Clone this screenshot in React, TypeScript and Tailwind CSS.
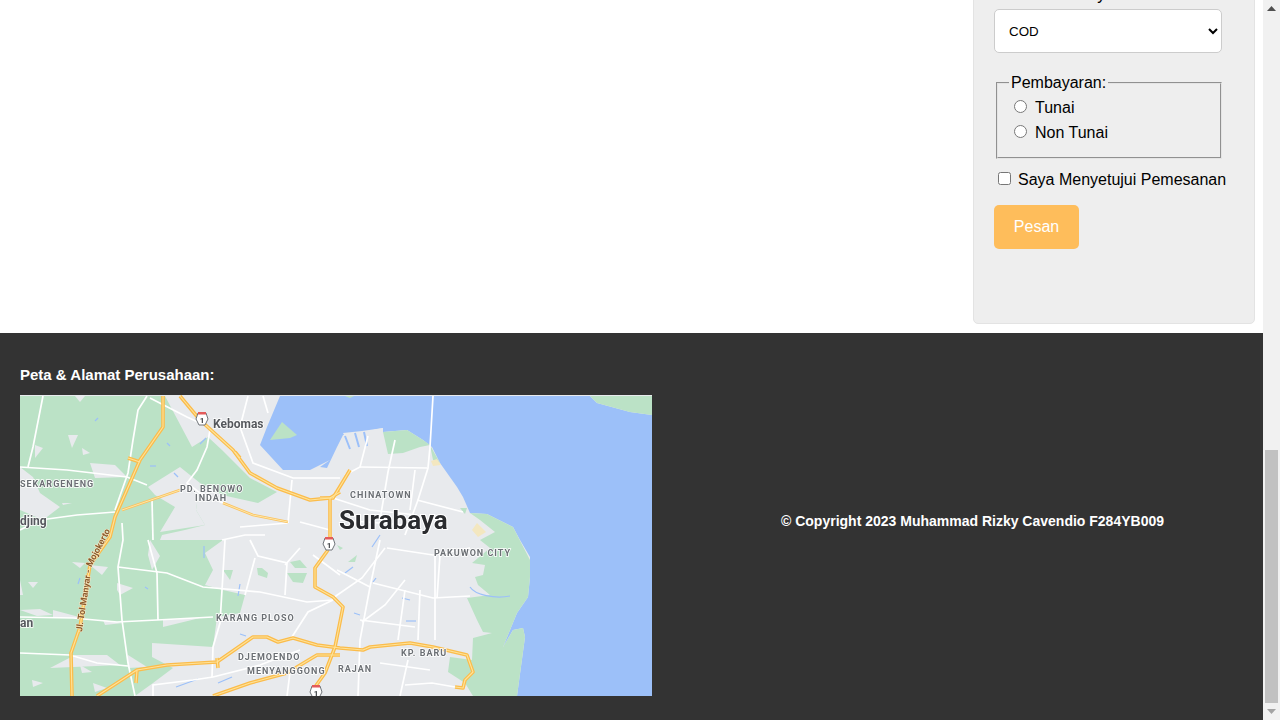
import React from 'react';

// map is traced in page pixels, so the viewBox starts at the map's corner on the page
const greens = [
  '20,396 165,396 192,447 208,437 222,450 250,478 277,492 258,503 222,495 200,483 196,510 205,525 185,530 162,535 160,540 223,540 205,553 213,570 205,585 223,590 245,595 240,613 217,617 213,647 152,643 152,657 173,668 153,683 135,696 20,696',
  '383,432 407,430 423,440 430,445 420,447 403,453 388,454',
  '430,445 440,463 433,460',
  '470,513 487,514 513,527 530,560 530,577 528,597 517,613 503,647 513,630 523,628 525,637 517,696 473,696 465,683 448,672 450,657 472,660 473,638 492,633 483,632 477,620 467,598 490,595 478,585 475,577 483,575 485,565 472,563 490,548 480,540 495,532 480,520',
  '590,396 652,396 652,415 630,412 597,403',
  '223,570 233,570 230,580',
  '257,568 262,568 268,573 267,578 258,575',
  '287,573 307,573 303,583 293,582',
  '290,562 300,560 307,568 295,568',
  '337,545 343,548 340,550',
  '348,562 357,555 355,562',
  '460,508 467,508 465,514',
  '282,422 297,435 290,438 270,440',
  '345,396 354,396 350,398',
];

const grayPatches = [
  '148,487 180,467 200,483 196,510 205,525 160,532 175,507 155,495',
  '90,463 115,465 127,477 95,478',
  '20,467 33,477 40,493 60,507 43,520 20,510',
  '68,435 78,435 72,448',
  '82,448 90,453 83,455',
  '35,445 43,448 35,458',
  '62,503 72,503 63,505',
  '75,396 85,396 80,402',
  '72,562 85,563 80,568',
  '90,565 108,567 102,575',
  '20,580 23,595 20,595',
  '28,582 38,582 33,588',
  '117,583 133,588 120,595 117,590',
  '20,610 40,609 53,615 37,616',
  '53,610 83,618 53,618',
  '103,620 123,623 105,625',
  '163,620 200,618 163,627',
  '32,680 43,683 33,687',
  '80,665 92,672 82,673',
  '93,683 107,688 95,692',
  '128,655 147,667 128,668',
  '75,655 107,655 120,665 50,668',
  '150,540 160,556 152,570 148,555',
];

const water = [
  '280,396 590,396 597,403 630,412 652,415 652,696 517,696 525,637 523,628 513,630 503,647 517,613 528,597 530,577 530,557 520,540 513,527 487,514 470,513 463,497 457,487 440,463 432,447 423,440 407,430 383,432 383,428 363,432 343,435 337,447 327,468 320,467 330,460 310,470 283,470 260,445 267,427',
];

const waterStreaks = [
  'M95 421l3 -3', 'M200 444l6 -6', 'M167 443l3 3', 'M150 466h6', 'M174 473l4 4',
  'M204 546v12', 'M80 578l-2 6', 'M145 587l3 2', 'M240 584l-2 12',
  'M176 687l22 -8', 'M218 683l14 -6', 'M240 634l6 2', 'M376 578l-3 4',
  'M402 598l8 2', 'M406 621h10', 'M354 613l6 2', 'M470 587c5 8 25 12 40 9',
  'M380 535l-8 12', 'M345 573l8 -6',
];

const whiteRoads = [
  'M43 396L33 447L28 467',
  'M20 467L67 470L127 477L147 485',
  'M147 396L138 410L133 440L128 473L115 510',
  'M20 530L40 520L77 515L115 512',
  'M150 398L187 417L200 423',
  'M248 396L240 427L253 463L293 478L340 478',
  'M263 396L268 413',
  'M292 480L288 523',
  'M210 430L207 447L197 470L187 483L200 493L223 503',
  'M152 500L153 540',
  'M148 540L157 573L158 620',
  'M122 523L123 540L118 567L122 620L128 663L135 696',
  'M118 567L167 573L203 587L260 592L307 602L333 600',
  'M20 617L73 618L117 622L157 620L213 617',
  'M225 540L222 590L220 623L213 647L212 677',
  'M20 653L70 655L97 663L128 666',
  'M153 696L153 685L193 680L213 677L260 665L300 650',
  'M433 396L430 447L428 468L418 500L405 535',
  'M360 467L427 468',
  'M417 500L463 512',
  'M333 498L370 510L417 515',
  'M387 548L433 555L470 548',
  'M435 555L435 640',
  'M373 583L433 598L470 596',
  'M380 540L370 587L360 640L358 696',
  'M345 475L360 467L368 436',
  'M395 440L388 472L380 520',
  'M415 470L410 510',
  'M340 520L405 525',
  'M337 570L370 587',
  'M333 598L362 578L385 548',
  'M405 590L398 640',
  'M420 590L418 640',
  'M360 620L415 627',
  'M405 580L385 605L362 622',
  'M408 660L400 696',
  'M380 663L430 670',
  'M405 685L432 683L455 687',
  'M250 540L258 556L287 563L285 595',
  'M255 558L245 595',
  'M300 548L285 565',
  'M313 555L340 575',
  'M290 640L308 612L333 600',
  'M287 696L290 672',
  'M440 555L437 598',
  'M222 540L245 535L265 535',
  'M240 527L288 523',
  'M300 522L330 530',
];

const yellowRoads = [
  'M163 396L163 427L140 460L115 517L110 537L90 565L80 627L71 653L72 696',
  'M180 396L200 420L233 450L250 473L277 488L310 500L330 498L340 492',
  'M320 498L333 498L350 470',
  'M330 498L330 537',
  'M328 550L315 568L315 587L333 597L343 607L335 647L325 673L315 687',
  'M97 696L137 670L167 665L217 662L253 637L267 637L278 642L293 638L317 645L340 648L363 650L370 647L410 643L433 647L467 655L473 672L465 680L463 688L455 687',
  'M213 696L250 683L287 673L317 655L340 655',
  'M128 458L140 462',
  'M235 452L240 458',
  'M137 670L136 683',
  'M217 658L218 668',
];

const yellowBranches = ['M122 510L180 490', 'M223 503L253 515L288 522'];

const shields: [number, number][] = [[202, 419], [329, 544], [316, 692]];

const labels = [
  { t: 'Kebomas', x: 213, y: 428, cls: 'text-[12px] fill-[#55585d]' },
  { t: 'SEKARGENENG', x: 20, y: 487, cls: 'text-[9px] tracking-[1px] fill-[#6b6f74]' },
  { t: 'djing', x: 20, y: 525, cls: 'text-[12px] fill-[#55585d]' },
  { t: 'PD. BENOWO', x: 180, y: 492, cls: 'text-[9px] tracking-[1px] fill-[#6b6f74]' },
  { t: 'INDAH', x: 195, y: 501, cls: 'text-[9px] tracking-[1px] fill-[#6b6f74]' },
  { t: 'CHINATOWN', x: 350, y: 498, cls: 'text-[9px] tracking-[1px] fill-[#6b6f74]' },
  { t: 'PAKUWON CITY', x: 434, y: 556, cls: 'text-[9px] tracking-[1px] fill-[#6b6f74]' },
  { t: 'KARANG PLOSO', x: 216, y: 621, cls: 'text-[9px] tracking-[1px] fill-[#6b6f74]' },
  { t: 'DJEMOENDO', x: 238, y: 660, cls: 'text-[9px] tracking-[1px] fill-[#6b6f74]' },
  { t: 'MENYANGGONG', x: 247, y: 674, cls: 'text-[9px] tracking-[1px] fill-[#6b6f74]' },
  { t: 'RAJAN', x: 338, y: 672, cls: 'text-[9px] tracking-[1px] fill-[#6b6f74]' },
  { t: 'KP. BARU', x: 401, y: 656, cls: 'text-[9px] tracking-[1px] fill-[#6b6f74]' },
  { t: 'an', x: 20, y: 627, cls: 'text-[12px] fill-[#55585d]' },
];

const MapPicture = () => (
  <svg viewBox="20 395 632 301" className="block w-[632px] h-[301px] blur-[0.5px] font-['Roboto',sans-serif]">
    <defs>
      <path id="tol-label" d="M82 632L92 566L116 520" />
    </defs>
    <rect x="20" y="395" width="632" height="301" fill="#e8eaed" />
    {water.map((p) => <polygon key={p} points={p} fill="#9cc0f9" />)}
    {greens.map((p) => <polygon key={p} points={p} fill="#bbe2c6" />)}
    {grayPatches.map((p) => <polygon key={p} points={p} fill="#e8eaed" />)}
    <polygon points="477,523 486,532 478,537 472,530" fill="#f3e7c0" />
    <polygon points="431,461 437,459 441,465 433,466" fill="#f3e7c0" />
    {/* harbour piers */}
    <polygon points="343,433 362,431 383,428 378,445 352,450" fill="#e8eaed" />
    <path d="M345 436l5 13M355 433l4 14M364 432l3 14" stroke="#9cc0f9" strokeWidth="2" fill="none" />
    {waterStreaks.map((d) => <path key={d} d={d} stroke="#9cc0f9" strokeWidth="1.2" fill="none" />)}
    {whiteRoads.map((d) => <path key={d} d={d} stroke="#ffffff" strokeWidth="1.7" fill="none" />)}
    {yellowBranches.map((d) => (
      <g key={d} fill="none">
        <path d={d} stroke="#fbc25e" strokeWidth="2.6" />
        <path d={d} stroke="#fee7a8" strokeWidth="1" />
      </g>
    ))}
    {yellowRoads.map((d) => <path key={d} d={d} stroke="#fbbc4b" strokeWidth="3.6" fill="none" strokeLinejoin="round" />)}
    {yellowRoads.map((d) => <path key={d + 'i'} d={d} stroke="#fee39a" strokeWidth="1.1" fill="none" strokeLinejoin="round" />)}
    {shields.map(([x, y]) => (
      <g key={x}>
        <polygon points={`${x - 4},${y - 6} ${x + 4},${y - 6} ${x + 6},${y} ${x + 3},${y + 6} ${x - 3},${y + 6} ${x - 6},${y}`} fill="#ffffff" stroke="#70757a" strokeWidth="1" />
        <rect x={x - 4} y={y - 7} width="8" height="2.5" fill="#e35b5b" />
        <text x={x} y={y + 4} textAnchor="middle" className="text-[8px] font-bold fill-[#3c4043]">1</text>
      </g>
    ))}
    {labels.map((l) => (
      <text key={l.t} x={l.x} y={l.y} stroke="#ffffff" strokeWidth="1.5" paintOrder="stroke" className={l.cls}>{l.t}</text>
    ))}
    <text x="339" y="529" stroke="#ffffff" strokeWidth="2" paintOrder="stroke" className="text-[26px] fill-[#2b2c2f]">Surabaya</text>
    <text stroke="#fbe9c8" strokeWidth="1" paintOrder="stroke" className="text-[9px] fill-[#8a5a2b]">
      <textPath href="#tol-label">Jl. Tol Manyar - Mojokerto</textPath>
    </text>
  </svg>
);

const OrderPanel = () => (
  <div className="w-[282px] h-[364px] -mt-[40px] px-[20px] pt-[25px] bg-[#eeeeee] border border-[#e3e3e3] rounded-[5px] text-[16px] text-black">
    <label className="block leading-[18px] mb-[5px]">Sistem Delivery:</label>
    <select className="block w-[228px] h-[44px] pl-[10px] pr-[1px] bg-white border border-[#cccccc] rounded-[5px] text-[13.33px] text-black">
      <option>COD</option>
    </select>
    <fieldset className="w-[226px] h-[85px] mt-[21px] ml-[2px] pl-[16px] border-2 border-[#e4e4e4] [border-style:groove]">
      <legend className="px-[2px] leading-[18px] -ml-[5px]">Pembayaran:</legend>
      <label className="flex items-center h-[25px] mt-[3px]">
        <input type="radio" name="bayar" className="w-[13px] h-[13px] -mt-[2px] mr-[8px]" />
        Tunai
      </label>
      <label className="flex items-center h-[25px]">
        <input type="radio" name="bayar" className="w-[13px] h-[13px] -mt-[2px] mr-[8px]" />
        Non Tunai
      </label>
    </fieldset>
    <label className="flex items-center h-[24px] mt-[9px] ml-[4px] whitespace-nowrap">
      <input type="checkbox" className="w-[13px] h-[13px] -mt-[3px] mr-[7px]" />
      Saya Menyetujui Pemesanan
    </label>
    <button className="block w-[85px] h-[44px] mt-[13px] bg-[#febd5b] rounded-[5px] text-white">Pesan</button>
  </div>
);

const Scrollbar = () => (
  <div className="w-[17px] shrink-0 flex flex-col bg-[#f1f1f1]">
    <div className="h-[17px] flex items-center justify-center">
      <svg width="9" height="5" viewBox="0 0 9 5"><path d="M4.5 0L9 5H0z" fill="#505050" /></svg>
    </div>
    <div className="flex-1" />
    <div className="h-[253px] mx-[2px] bg-[#c1c1c1]" />
    <div className="h-[17px] flex items-center justify-center">
      <svg width="9" height="5" viewBox="0 0 9 5"><path d="M0 0H9L4.5 5z" fill="#a3a3a3" /></svg>
    </div>
  </div>
);

export default function App() {
  return (
    <div className="flex w-[1280px] h-[720px] overflow-hidden bg-white font-['Liberation_Sans',Arial,sans-serif]">
      <div className="flex-1 flex flex-col min-w-0">
        <section className="h-[333px] flex justify-end pr-[8px] overflow-hidden">
          <OrderPanel />
        </section>
        <footer className="flex-1 flex pt-[13px] pb-[24px] px-[20px] bg-[#333333] text-white font-bold">
          <div className="w-[632px] shrink-0 pt-[20px]">
            <h3 className="text-[15px] leading-[18px] mb-[11px]">Peta &amp; Alamat Perusahaan:</h3>
            <MapPicture />
          </div>
          <div className="flex-1 ml-[50px] flex items-center justify-center text-[14px]">
            © Copyright 2023 Muhammad Rizky Cavendio F284YB009
          </div>
        </footer>
      </div>
      <Scrollbar />
    </div>
  );
}
